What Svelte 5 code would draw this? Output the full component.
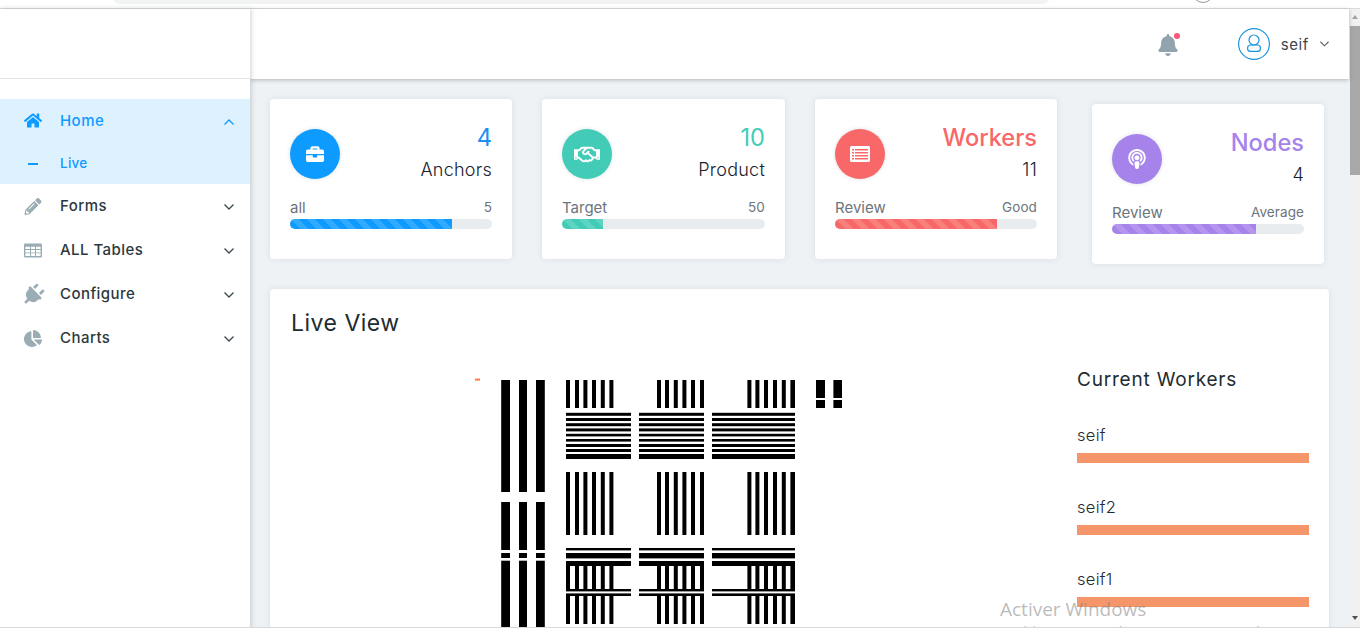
<script>
  const cards = [
    { cls: 'blue', title: '4', sub: 'Anchors', left: 'all', right: '5', pct: 80, w: 'w242', icon: 'brief' },
    { cls: 'teal', title: '10', sub: 'Product', left: 'Target', right: '50', pct: 20, w: 'w243', icon: 'hand' },
    { cls: 'red', title: 'Workers', sub: '11', left: 'Review', right: 'Good', pct: 80, w: 'w242', icon: 'list' },
    { cls: 'purple', title: 'Nodes', sub: '4', left: 'Review', right: 'Average', pct: 75, w: 'w232', icon: 'pod' }
  ];
  const navs = [
    { label: 'Forms', icon: 'pencil' },
    { label: 'ALL Tables', icon: 'table' },
    { label: 'Configure', icon: 'plug' },
    { label: 'Charts', icon: 'pie' }
  ];
  const workers = ['seif', 'seif2', 'seif1'];

  // Fiducial picture: coordinates relative to its top-left corner (470, 375)
  const ox = 470, oy = 375;
  const rects = [];
  const r = (x, y, w, h) => rects.push({ x: x - ox, y: y - oy, w, h });

  const tall = [[501.2, 8.8], [519, 8], [536, 8.8]];
  for (const [x, w] of tall) {
    r(x, 380, w, 112);
    r(x, 502, w, 48);
    r(x, 553, w, 5);
    r(x, 560.7, w, 70);
  }
  const vA = [566, 575, 583.4, 592, 600.8, 609.4];
  const vB = [657, 665, 673.8, 682.4, 691, 700];
  const vC = [747.4, 755.4, 764, 773, 781.8, 790.4];
  const vert = (y, h) => {
    for (const x of [...vA, ...vB, ...vC]) r(x, y, x > 790 ? 4.6 : 4, h);
  };
  vert(380, 28);
  vert(472, 63);
  vert(565, 25);
  vert(595, 29);
  const spans = [[566, 65], [639, 65], [712, 83]];
  const horiz = (y, h) => {
    for (const [x, w] of spans) r(x, y, w, h);
  };
  const lines = [[412.8, 3], [418, 3], [423.2, 3], [428.4, 3], [433.8, 2.6], [439, 2.6], [444, 3], [449, 3], [454, 5]];
  for (const [y, h] of lines) horiz(y, h);
  for (const [y, h] of [[548, 2.4], [553, 5.4], [561, 5], [589, 2.4], [593.4, 2.6]]) horiz(y, h);
  r(816, 380, 9, 18);
  r(816, 400, 9, 8);
  r(833.4, 380, 8.6, 18);
  r(833.4, 400, 8.6, 8);
</script>

<div class="window">
  <div class="chrome">
    <div class="address"></div>
    <div class="profile"></div>
  </div>

  <div class="frame">
    <aside class="sidebar">
      <div class="logo"></div>
      <nav class="nav">
        <div class="open">
          <div class="item active">
            <svg class="ico" viewBox="0 0 576 512"><path d="M280.37 148.26L96 300.11V464a16 16 0 0 0 16 16l112.06-.29a16 16 0 0 0 15.92-16V368a16 16 0 0 1 16-16h64a16 16 0 0 1 16 16v95.64a16 16 0 0 0 16 16.05L464 480a16 16 0 0 0 16-16V300L295.67 148.26a12.19 12.19 0 0 0-15.3 0zM571.6 251.47L488 182.56V44.05a12 12 0 0 0-12-12h-56a12 12 0 0 0-12 12v72.61L318.47 43a48 48 0 0 0-61 0L4.34 251.47a12 12 0 0 0-1.6 16.9l25.5 31A12 12 0 0 0 45.15 301l235.22-193.74a12.19 12.19 0 0 1 15.3 0L530.9 301a12 12 0 0 0 16.9-1.6l25.5-31a12 12 0 0 0-1.7-16.93z"/></svg>
            <span class="label">Home</span>
            <svg class="chev" viewBox="0 0 10 6"><polyline points="0.5,5.5 5,1 9.5,5.5"/></svg>
          </div>
          <div class="sub">
            <span class="dash"></span>
            <span class="sublabel">Live</span>
          </div>
        </div>
        {#each navs as n}
          <div class="item">
            {#if n.icon === 'pencil'}
              <svg class="ico" viewBox="0 0 512 512"><path d="M497.9 142.1l-46.1 46.1c-4.7 4.7-12.3 4.7-17 0l-111-111c-4.7-4.7-4.7-12.3 0-17l46.1-46.1c18.7-18.7 49.1-18.7 67.9 0l60.1 60.1c18.8 18.7 18.8 49.1 0 67.9zM284.2 99.8L21.6 362.4.4 483.9c-2.9 16.4 11.4 30.6 27.8 27.8l121.5-21.3 262.6-262.6c4.7-4.7 4.7-12.3 0-17l-111-111c-4.8-4.7-12.4-4.7-17.1 0zM124.1 339.9c-5.5-5.5-5.5-14.3 0-19.8l154-154c5.5-5.5 14.3-5.5 19.8 0s5.5 14.3 0 19.8l-154 154c-5.5 5.5-14.3 5.5-19.8 0zM88 424h48v36.3l-64.5 11.3-31.1-31.1L51.7 376H88v48z"/></svg>
            {:else if n.icon === 'table'}
              <svg class="ico" viewBox="0 0 18 16"><path fill-rule="evenodd" d="M1.2 1h15.6A1.2 1.2 0 0 1 18 2.2v11.6a1.2 1.2 0 0 1-1.2 1.2H1.2A1.2 1.2 0 0 1 0 13.8V2.2A1.2 1.2 0 0 1 1.2 1zM1.4 4.2v2.4h4.6V4.2zM7 4.2v2.4h4V4.2zM12 4.2v2.4h4.6V4.2zM1.4 7.5v2.4h4.6V7.5zM7 7.5v2.4h4V7.5zM12 7.5v2.4h4.6V7.5zM1.4 10.8v2.8h4.6v-2.8zM7 10.8v2.8h4v-2.8zM12 10.8v2.8h4.6v-2.8z"/></svg>
            {:else if n.icon === 'plug'}
              <svg class="ico" viewBox="60 50 390 390"><g transform="rotate(45 256 256) translate(64 0)"><path d="M320,32a32,32,0,0,0-64,0v96h64Zm48,128H16A16,16,0,0,0,0,176v32a16,16,0,0,0,16,16H32v32A160.07,160.07,0,0,0,160,412.8V512h64V412.8A160.07,160.07,0,0,0,352,256V224h16a16,16,0,0,0,16-16V176A16,16,0,0,0,368,160ZM128,32a32,32,0,0,0-64,0v96h64Z"/></g></svg>
            {:else}
              <svg class="ico" viewBox="0 0 544 512"><path d="M527.79 288H290.5l158.03 158.03c6.04 6.04 15.98 6.53 22.19.68 38.7-36.46 65.32-85.61 73.13-140.86 1.34-9.46-6.51-17.85-16.06-17.85zm-15.83-64.8C503.72 103.74 408.26 8.28 288.8.04 279.68-.59 272 7.1 272 16.24V240h223.77c9.14 0 16.82-7.68 16.19-16.8zM224 288V50.71c0-9.55-8.39-17.4-17.84-16.06C86.99 51.49-4.1 155.6.14 280.37 4.5 408.51 114.83 513.59 243.03 511.98c50.4-.63 96.97-16.87 135.26-44.03 7.9-5.6 8.42-17.23 1.57-24.08L224 288z"/></svg>
            {/if}
            <span class="label">{n.label}</span>
            <svg class="chev" viewBox="0 0 10 6"><polyline points="0.5,0.5 5,5 9.5,0.5"/></svg>
          </div>
        {/each}
      </nav>
    </aside>

    <div class="main">
      <header class="topbar">
        <div class="bell">
          <svg viewBox="0 0 448 512"><path d="M224 512c35.32 0 63.97-28.65 63.97-64H160.03c0 35.35 28.65 64 63.97 64zm215.39-149.71c-19.32-20.76-55.47-51.99-55.47-154.29 0-77.7-54.48-139.9-127.94-155.16V32c0-17.67-14.32-32-31.98-32s-31.98 14.33-31.98 32v20.84C118.56 68.1 64.08 130.3 64.08 208c0 102.3-36.15 133.53-55.47 154.29-6 6.45-8.66 14.16-8.61 21.71.11 16.4 12.98 32 32.1 32h383.8c19.12 0 32-15.6 32.1-32 .05-7.55-2.61-15.27-8.61-21.71z"/></svg>
          <span class="dot"></span>
        </div>
        <div class="avatar">
          <svg viewBox="0 0 32 32"><circle cx="16" cy="16" r="15.4"/><circle cx="16" cy="12" r="5"/><rect x="9.6" y="17" width="12.8" height="6.4" rx="3"/></svg>
        </div>
        <span class="uname">seif</span>
        <svg class="uchev" viewBox="0 0 10 6"><polyline points="0.5,0.5 5,5 9.5,0.5"/></svg>
      </header>

      <div class="content">
        <div class="cards">
          {#each cards as c}
            <section class="card {c.cls} {c.w}">
              <div class="top">
                <div class="circle">
                  {#if c.icon === 'brief'}
                    <svg class="ci i20" viewBox="0 0 512 512"><path d="M320 336c0 8.84-7.16 16-16 16h-96c-8.84 0-16-7.16-16-16v-48H0v144c0 25.6 22.4 48 48 48h416c25.6 0 48-22.4 48-48V288H320v48zm144-208h-80V80c0-25.6-22.4-48-48-48H176c-25.6 0-48 22.4-48 48v48H48c-25.6 0-48 22.4-48 48v80h512v-80c0-25.6-22.4-48-48-48zm-144 0H192V96h128v32z"/></svg>
                  {:else if c.icon === 'hand'}
                    <svg class="ci i26" viewBox="0 0 640 512"><path d="M519.2 127.9l-47.6-47.6A56.252 56.252 0 0 0 432 64H205.2c-14.8 0-29.1 5.9-39.6 16.3L118 127.9H0v255.7h64c17.6 0 31.8-14.2 31.9-31.7h9.1l84.6 76.4c30.9 25.1 73.8 25.7 105.6 3.8 12.5 10.8 26 15.9 41.1 15.9 18.2 0 35.3-7.4 48.8-24 22.1 8.7 48.2 2.6 64-16.8l26.2-32.3c5.6-6.9 9.1-14.8 10.9-23h57.9c.1 17.5 14.4 31.7 31.9 31.7h64V127.9H519.2zM48 351.6c-8.8 0-16-7.2-16-16s7.2-16 16-16 16 7.2 16 16c0 8.9-7.2 16-16 16zm390-6.9l-26.1 32.2c-2.8 3.4-7.8 4-11.3 1.2l-23.9-19.4-30 36.5c-6 7.3-15 4.8-18 2.4l-36.8-31.5-15.6 19.2c-13.9 17.1-39.2 19.7-55.3 6.6l-97.3-88H96V175.8h41.9l61.7-61.6c2-.8 3.7-1.5 5.7-2.3H262l-38.7 35.5c-29.4 26.9-31.1 72.3-4.4 101.3 14.8 16.2 61.2 41.2 101.5 4.4l8.2-7.5 108.2 87.8c3.4 2.8 3.9 7.9 1.2 11.3zm106-40.8h-69.2c-2.3-2.8-4.9-5.4-7.7-7.7l-102.7-83.4 12.5-11.4c6.5-6 7-16.1 1-22.6L367 167.1c-6-6.5-16.1-6.9-22.6-1l-55.2 50.6c-9.5 8.7-25.7 9.4-34.6 0-9.3-9.9-8.5-25.1 1.2-33.9l65.6-60.1c7.4-6.8 17-10.5 27-10.5l83.7-.2c2.1 0 4.1.8 5.5 2.3l61.7 61.6H544v128zm48 47.7c-8.8 0-16-7.2-16-16s7.2-16 16-16 16 7.2 16 16c0 8.9-7.2 16-16 16z"/></svg>
                  {:else if c.icon === 'list'}
                    <svg class="ci i20" viewBox="0 0 20 16"><path fill-rule="evenodd" d="M1.5 0h17A1.5 1.5 0 0 1 20 1.5v13a1.5 1.5 0 0 1-1.5 1.5h-17A1.5 1.5 0 0 1 0 14.5v-13A1.5 1.5 0 0 1 1.5 0zM2 3v1.4h2V3zM5 3v1.4h13V3zM2 6v1.4h2V6zM5 6v1.4h13V6zM2 9v1.4h2V9zM5 9v1.4h13V9zM2 12v1.4h2V12zM5 12v1.4h13V12z"/></svg>
                  {:else}
                    <svg class="ci i18" viewBox="0 0 448 512"><path d="M267.429 488.563C262.286 507.573 242.858 512 224 512c-18.857 0-38.286-4.427-43.428-23.437C172.927 460.134 160 388.898 160 355.75c0-35.156 31.142-43.75 64-43.75s64 8.594 64 43.75c0 32.949-12.871 104.179-20.571 132.813zM156.867 288.554c-18.693-18.308-29.958-44.173-28.784-72.599 2.054-49.724 42.395-89.956 92.124-91.881C274.862 121.958 320 165.807 320 220c0 26.827-11.064 51.116-28.866 68.552-2.675 2.62-2.401 6.986.628 9.187 9.312 6.765 16.46 15.343 21.234 25.363 1.741 3.654 6.497 4.66 9.449 1.891 28.826-27.043 46.553-65.783 45.511-108.565-1.855-76.206-63.595-138.208-139.793-140.369C146.869 73.753 80 139.215 80 220c0 41.361 17.532 78.7 45.55 104.989 2.953 2.771 7.711 1.77 9.453-1.887 4.774-10.021 11.923-18.598 21.235-25.363 3.029-2.2 3.304-6.566.629-9.185zM224 0C100.204 0 0 100.185 0 224c0 89.992 52.602 165.647 125.739 201.408 4.333 2.118 9.267-1.544 8.535-6.31-2.382-15.512-4.342-30.946-5.406-44.339-.146-1.836-1.149-3.486-2.678-4.512-47.4-31.806-78.564-86.016-78.187-147.347.592-96.237 79.29-174.648 175.529-174.899C320.793 47.747 400 126.797 400 224c0 61.932-32.158 116.49-80.65 147.867-.999 14.037-3.069 30.588-5.624 47.23-.732 4.767 4.203 8.429 8.535 6.31C395.227 389.727 448 314.187 448 224 448 100.185 347.815 0 224 0zm0 160c-35.346 0-64 28.654-64 64s28.654 64 64 64 64-28.654 64-64-28.654-64-64-64z"/></svg>
                  {/if}
                </div>
                <div class="nums">
                  <div class="big">{c.title}</div>
                  <div class="small">{c.sub}</div>
                </div>
              </div>
              <div class="meta"><span class="ml">{c.left}</span><span class="mr">{c.right}</span></div>
              <div class="track"><div class="fill" style="width:{c.pct}%"></div></div>
            </section>
          {/each}
        </div>

        <section class="panel">
          <h2 class="ptitle">Live View</h2>
          <div class="pbody">
            <div class="feed">
              <svg class="target" width="380" height="260" viewBox="0 0 380 260">
                <rect class="mark" x="5" y="3.6" width="5" height="2"/>
                {#each rects as b}
                  <rect x={b.x} y={b.y} width={b.w} height={b.h}/>
                {/each}
              </svg>
            </div>
            <div class="workers">
              <h3 class="wtitle">Current Workers</h3>
              {#each workers as w}
                <div class="worker">
                  <div class="wname">{w}</div>
                  <div class="wbar"></div>
                </div>
              {/each}
            </div>
          </div>
        </section>
      </div>
    </div>

    <div class="scrollbar">
      <span class="up"></span>
      <span class="thumb"></span>
      <span class="down"></span>
    </div>
  </div>

  <div class="watermark">
    <div class="wm1">Activer Windows</div>
    <div class="wm2">Accédez aux paramètres pour activer Windows.</div>
  </div>
  <div class="edge"></div>
</div>

<style>
  :global(body) {
    margin: 0;
    background: #fff;
    overflow: hidden;
  }
  .window {
    position: relative;
    width: 1360px;
    height: 629px;
    overflow: hidden;
    font-family: Inter, "Liberation Sans", sans-serif;
    color: #1d2a33;
  }
  .chrome {
    position: relative;
    height: 8px;
    border-bottom: 1px solid #dcdcdc;
    background: #fff;
    overflow: hidden;
  }
  .address {
    position: absolute;
    left: 112px;
    top: -12px;
    width: 938px;
    height: 16px;
    border-radius: 8px;
    background: #f1f3f4;
  }
  .profile {
    position: absolute;
    left: 1192px;
    top: -19px;
    width: 20px;
    height: 20px;
    border: 1px solid #9a9a9a;
    border-radius: 50%;
  }
  .frame {
    display: flex;
    height: 620px;
  }
  .sidebar {
    position: relative;
    z-index: 3;
    flex: 0 0 250px;
    background: #fff;
    box-shadow: 1px 0 5px rgba(60, 70, 80, 0.25);
  }
  .logo {
    height: 69px;
    border-bottom: 1px solid #e4e4e4;
  }
  .nav {
    padding-top: 20px;
  }
  .open {
    background: #def1ff;
    height: 85px;
  }
  .item {
    display: flex;
    align-items: center;
    height: 44px;
    color: #2b3840;
  }
  .item.active {
    color: #0d9bff;
  }
  .ico {
    flex: 0 0 18px;
    width: 18px;
    height: 17px;
    margin-left: 24px;
    fill: #9aacb4;
    overflow: visible;
  }
  .active .ico {
    fill: #0d9bff;
    margin-top: -2px;
  }
  .label {
    margin-left: 18px;
    padding-bottom: 1px;
    font-size: 15px;
    font-weight: 500;
    letter-spacing: 0.45px;
    flex: 1;
  }
  .chev {
    width: 10px;
    height: 6px;
    margin-right: 16px;
    margin-top: 2px;
    fill: none;
    stroke: #3d484f;
    stroke-width: 1.3;
  }
  .active .chev {
    stroke: #0d9bff;
  }
  .sub {
    display: flex;
    align-items: center;
    height: 41px;
    color: #0d9bff;
  }
  .dash {
    width: 10px;
    height: 2px;
    margin-left: 28px;
    background: #0d9bff;
  }
  .sublabel {
    margin-left: 22px;
    padding-bottom: 1px;
    font-size: 13.5px;
    font-weight: 500;
    letter-spacing: 0.25px;
  }
  .main {
    flex: 1;
    min-width: 0;
    background: #eef2f5;
  }
  .topbar {
    position: relative;
    z-index: 2;
    display: flex;
    align-items: center;
    height: 70px;
    padding-right: 20px;
    background: #fff;
    box-shadow: 0 1px 4px rgba(40, 50, 60, 0.3);
    justify-content: flex-end;
  }
  .bell {
    position: relative;
    width: 20px;
    height: 22px;
    margin-right: 60px;
    margin-top: 2px;
  }
  .bell svg {
    display: block;
    width: 20px;
    height: 22px;
    fill: #91a4ad;
  }
  .dot {
    position: absolute;
    right: -2px;
    top: -1px;
    width: 6px;
    height: 6px;
    border-radius: 50%;
    background: #f5587b;
  }
  .avatar {
    width: 32px;
    height: 32px;
  }
  .avatar svg {
    display: block;
    width: 32px;
    height: 32px;
    fill: none;
    stroke: #1b95e0;
    stroke-width: 1.2;
  }
  .uname {
    margin-left: 11px;
    font-size: 15px;
    letter-spacing: 0.6px;
    color: #3b454c;
  }
  .uchev {
    width: 9px;
    height: 6px;
    margin-left: 11px;
    fill: none;
    stroke: #555e64;
    stroke-width: 1.2;
  }
  .content {
    padding: 20px 20px 0;
  }
  .cards {
    display: flex;
    gap: 30px;
    margin-bottom: 25px;
    align-items: flex-start;
  }
  .card {
    box-sizing: border-box;
    height: 160px;
    padding: 24px 20px 0;
    background: #fff;
    border-radius: 4px;
    box-shadow: 0 0 6px rgba(80, 100, 120, 0.13);
  }
  .w242 { width: 242px; }
  .w243 { width: 243px; }
  .w232 { width: 232px; margin-top: 5px; margin-left: 5px; }
  .top {
    display: flex;
    justify-content: space-between;
    height: 76px;
  }
  .circle {
    display: flex;
    align-items: center;
    justify-content: center;
    width: 50px;
    height: 50px;
    margin-top: 6px;
    border-radius: 50%;
    box-shadow: 0 0 4px rgba(80, 100, 120, 0.2);
  }
  .ci { fill: #fff; display: block; }
  .i20 { width: 20px; height: 18px; }
  .i26 { width: 26px; height: 21px; }
  .i18 { width: 18px; height: 20px; }
  .nums {
    text-align: right;
  }
  .big {
    height: 28px;
    font-size: 23.6px;
    line-height: 30px;
    font-weight: 400;
  }
  .small {
    height: 28px;
    margin-top: 4px;
    font-size: 18px;
    line-height: 30px;
    font-weight: 300;
    letter-spacing: 0.25px;
    color: #16222e;
  }
  .meta {
    display: flex;
    justify-content: space-between;
    align-items: center;
    height: 16px;
    margin-bottom: 4px;
    color: #6c757d;
  }
  .ml { font-size: 15px; }
  .mr { font-size: 13.5px; letter-spacing: 0.1px; }
  .track {
    height: 10px;
    border-radius: 5px;
    overflow: hidden;
    background: #e9ecef;
  }
  .fill {
    height: 100%;
    background-image: linear-gradient(45deg, rgba(255,255,255,.15) 25%, transparent 25%, transparent 50%, rgba(255,255,255,.15) 50%, rgba(255,255,255,.15) 75%, transparent 75%, transparent);
    background-size: 16px 16px;
  }
  .blue .circle, .blue .fill { background-color: #0d9bff; }
  .blue .big { color: #1b8ff0; }
  .teal .circle, .teal .fill { background-color: #42ccb8; }
  .teal .big { color: #42ccb8; }
  .red .circle, .red .fill { background-color: #f96868; }
  .red .big { color: #f96868; font-weight: 500; }
  .purple .circle, .purple .fill { background-color: #a683eb; }
  .purple .big { color: #a683eb; font-weight: 500; }
  .panel {
    height: 400px;
    background: #fff;
    border-radius: 4px;
    box-shadow: 0 0 6px rgba(80, 100, 120, 0.13);
  }
  .ptitle {
    margin: 0;
    height: 68px;
    padding-left: 21px;
    font-size: 23px;
    font-weight: 400;
    line-height: 69px;
    letter-spacing: 0.5px;
    color: #212b32;
  }
  .pbody {
    display: flex;
    justify-content: space-between;
    padding-right: 20px;
  }
  .feed {
    padding: 18px 0 0 200px;
  }
  .target {
    display: block;
    fill: #000;
  }
  .mark {
    fill: #ff7a45;
  }
  .workers {
    width: 232px;
  }
  .wtitle {
    margin: 0 0 20px;
    height: 44px;
    font-size: 19px;
    font-weight: 400;
    line-height: 46px;
    letter-spacing: 0.8px;
    color: #212b32;
  }
  .worker {
    margin-bottom: 30px;
  }
  .wname {
    height: 28px;
    font-size: 16.5px;
    font-weight: 300;
    line-height: 28px;
    color: #1f2a31;
    margin-bottom: 4px;
    letter-spacing: 0.3px;
  }
  .wbar {
    height: 10px;
    background: #f4956a;
  }
  .scrollbar {
    position: relative;
    flex: 0 0 11px;
    background: #f1f1f1;
  }
  .up, .down {
    position: absolute;
    left: 3px;
    width: 0;
    height: 0;
    border-left: 3.5px solid transparent;
    border-right: 3.5px solid transparent;
  }
  .up {
    top: 6px;
    border-bottom: 4px solid #a3a3a3;
  }
  .down {
    top: 607px;
    border-top: 4px solid #505050;
  }
  .thumb {
    position: absolute;
    left: 1px;
    right: 0;
    top: 17px;
    height: 149px;
    background: #a8a8a8;
  }
  .watermark {
    position: absolute;
    z-index: 4;
    left: 1000px;
    top: 596px;
    color: rgba(120, 120, 120, 0.5);
    font-family: "Open Sans", sans-serif;
    white-space: nowrap;
  }
  .wm1 {
    font-size: 19px;
    line-height: 26px;
  }
  .wm2 {
    font-size: 13px;
    line-height: 18px;
  }
  .edge {
    position: absolute;
    z-index: 5;
    left: 0;
    right: 0;
    bottom: 0;
    height: 1px;
    background: #fff;
    border-top: 1px solid #d8d8d8;
  }
</style>
